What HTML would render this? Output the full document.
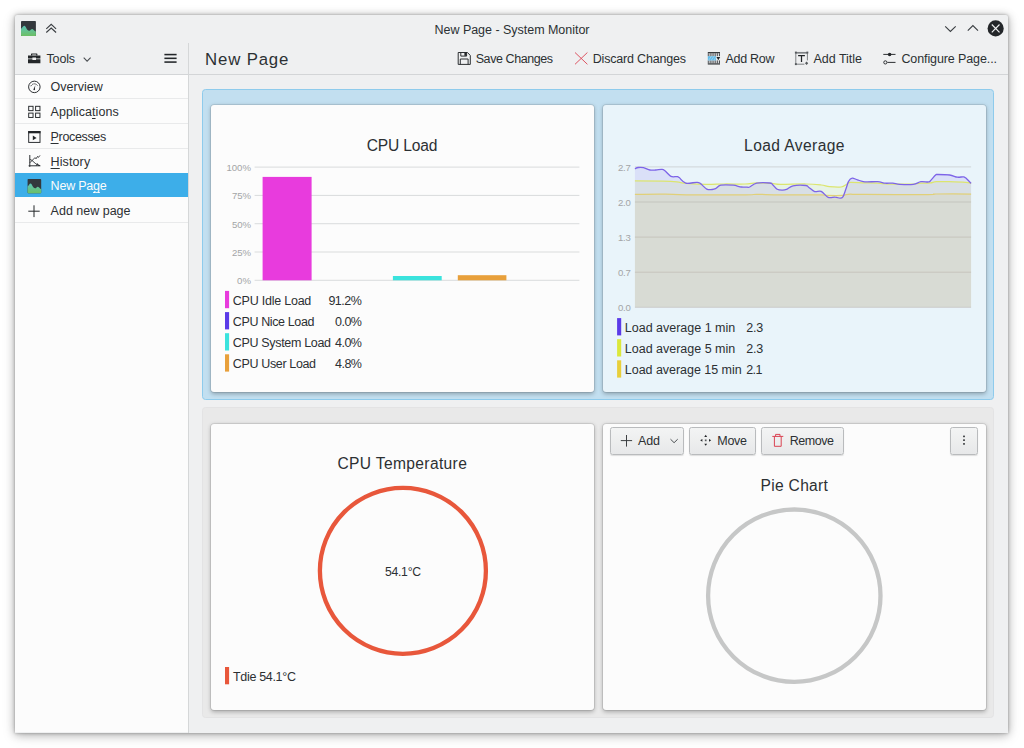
<!DOCTYPE html>
<html lang="en">
<head>
<meta charset="utf-8">
<title>New Page - System Monitor</title>
<style>
html,body{margin:0;padding:0;background:#fff;}
body{width:1024px;height:748px;position:relative;overflow:hidden;font-family:"Liberation Sans",sans-serif;}
.abs{position:absolute;}
#win{position:absolute;left:15px;top:15px;width:993.3px;height:717.5px;background:#eff0f1;border-radius:2px 2px 0 0;
  box-shadow:0 0 3px rgba(0,0,0,.30),0 1px 8px rgba(0,0,0,.25),0 3px 14px rgba(0,0,0,.15);}
#list{position:absolute;left:15px;top:74.6px;width:173px;height:657.9px;background:#fcfcfc;}
.sep{position:absolute;left:15px;width:173px;height:1px;background:#e9eaeb;}
#sel{position:absolute;left:15px;top:173px;width:173px;height:24.2px;background:#3daee9;}
#vsep{position:absolute;left:188px;top:43px;width:1px;height:689.5px;background:#d5d7d8;}
#hsep{position:absolute;left:15px;top:73.6px;width:993.3px;height:1px;background:#d3d5d7;}
.row{position:absolute;border-radius:3.5px;box-sizing:border-box;}
#row1{left:202px;top:88.5px;width:791.8px;height:311.4px;background:#c2dff0;border:1.2px solid #8ecbec;}
#row2{left:202px;top:407.2px;width:791.8px;height:311px;background:#e9e9e9;border:1px solid #e3e3e4;}
.card{position:absolute;border-radius:3px;background:#fcfcfc;
  box-shadow:0 0 0 0.8px rgba(0,0,0,.10),0 1.5px 4px rgba(0,0,0,.28);}
#c1{left:210.8px;top:105.4px;width:383.2px;height:286.2px;}
#c2{left:603px;top:105.4px;width:383.2px;height:286.2px;background:#e9f4fa;}
#c3{left:210.8px;top:423.5px;width:383.2px;height:286px;}
#c4{left:603px;top:423.5px;width:383.2px;height:286px;}
.btn{position:absolute;top:427px;height:28px;box-sizing:border-box;border:1px solid #b9bbbd;border-radius:2.5px;
  background:linear-gradient(#f3f4f4,#e7e8e9);box-shadow:0 1px 1px rgba(0,0,0,.12);}
.t{position:absolute;white-space:nowrap;line-height:20px;height:20px;}
.t u{text-decoration:underline;text-decoration-thickness:1px;text-underline-offset:1.5px;}
svg{position:absolute;left:0;top:0;overflow:visible;}
</style>
</head>
<body>
<div id="win"></div>
<div id="list"></div>
<div class="sep" style="top:98px"></div>
<div class="sep" style="top:123px"></div>
<div class="sep" style="top:148px"></div>
<div class="sep" style="top:172.5px"></div>
<div class="sep" style="top:222px"></div>
<div id="sel"></div>
<div id="hsep"></div>
<div id="vsep"></div>

<div class="row" id="row1"></div>
<div class="row" id="row2"></div>
<div class="card" id="c1"></div>
<div class="card" id="c2"></div>
<div class="card" id="c3"></div>
<div class="card" id="c4"></div>

<div class="btn" style="left:610px;width:73.8px"></div>
<div class="btn" style="left:688.9px;width:67.6px"></div>
<div class="btn" style="left:761.1px;width:82.6px"></div>
<div class="btn" style="left:950px;width:27.6px"></div>

<svg width="1024" height="748" viewBox="0 0 1024 748">
<g transform="translate(21,21) scale(0.9933333333333334,1.0)">
<defs><linearGradient id="g1" x1="0" y1="0" x2="0" y2="1"><stop offset="0" stop-color="#5bc4b8"/><stop offset="1" stop-color="#6dbf64"/></linearGradient></defs>
<rect x="0" y="0" width="15" height="15" rx="0.8" fill="#33383d"/>
<path d="M0,7.8 C1.2,7.2 2.2,4.6 3.4,4.8 C4.8,5 5.8,9.6 8.2,9.8 C9.6,9.9 10.2,7.9 11.4,8.1 C12.6,8.3 13.4,10.2 15,10.6 V14.2 Q15,15 14.2,15 H0.8 Q0,15 0,14.2 Z" fill="url(#g1)"/>
</g>
<g transform="translate(27.6,179) scale(0.9066666666666666,0.9533333333333334)">
<defs><linearGradient id="g2" x1="0" y1="0" x2="0" y2="1"><stop offset="0" stop-color="#5bc4b8"/><stop offset="1" stop-color="#6dbf64"/></linearGradient></defs>
<rect x="0" y="0" width="15" height="15" rx="0.8" fill="#33383d"/>
<path d="M0,7.8 C1.2,7.2 2.2,4.6 3.4,4.8 C4.8,5 5.8,9.6 8.2,9.8 C9.6,9.9 10.2,7.9 11.4,8.1 C12.6,8.3 13.4,10.2 15,10.6 V14.2 Q15,15 14.2,15 H0.8 Q0,15 0,14.2 Z" fill="url(#g2)"/>
</g>
<g fill="none" stroke="#3b3f43" stroke-width="1.15" stroke-linejoin="miter"><path d="M46.3,28.8 L51.2,24.3 L56.1,28.8"/><path d="M46.3,32.5 L51.2,28 L56.1,32.5"/></g>
<g fill="none" stroke="#3b3f43" stroke-width="1.15"><path d="M945.2,26.4 L950.4,31.4 L955.7,26.4"/><path d="M967.8,30.6 L972.9,25.5 L978,30.6"/></g>
<circle cx="995.65" cy="28.4" r="8.05" fill="#232629"/>
<path d="M991.8,24.5 L999.5,32.3 M999.5,24.5 L991.8,32.3" stroke="#eff0f1" stroke-width="1.15" fill="none"/>
<g fill="#232629">
<path d="M31.6,53.4 H36.8 Q37.4,53.4 37.4,54 V55.6 H36.2 V54.6 H32.2 V55.6 H31 V54 Q31,53.4 31.6,53.4 Z"/>
<path d="M28,55.6 H40.4 V58.6 H36 V57.6 H32.4 V58.6 H28 Z"/>
<path d="M28,59.3 H32.4 V60 H36 V59.3 H40.4 V63.3 H28 Z"/>
</g>
<path d="M83.7,57.6 L87.1,61.2 L90.6,57.6" fill="none" stroke="#4a4e52" stroke-width="1.05"/>
<g fill="#232629"><rect x="164.4" y="53.8" width="12.2" height="1.55"/><rect x="164.4" y="57.55" width="12.2" height="1.55"/><rect x="164.4" y="61.3" width="12.2" height="1.55"/></g>
<g fill="none" stroke="#232629" stroke-width="0.95">
<circle cx="34.35" cy="86.9" r="5.75"/>
<path d="M30.9,86.2 A3.7,3.7 0 0 1 37.8,86.2" stroke-width="1" stroke-dasharray="1.3 0.9"/>
</g>
<path d="M35.3,85.3 L34.9,88.9 A0.8,0.8 0 1 1 33.9,88.6 Z" fill="#232629"/>
<rect x="28.7" y="106.3" width="4.35" height="4.35" fill="none" stroke="#232629" stroke-width="0.95"/>
<rect x="35.6" y="106.3" width="4.35" height="4.35" fill="none" stroke="#232629" stroke-width="0.95"/>
<rect x="28.7" y="113.1" width="4.35" height="4.35" fill="none" stroke="#232629" stroke-width="0.95"/>
<rect x="35.6" y="113.1" width="4.35" height="4.35" fill="none" stroke="#232629" stroke-width="0.95"/>
<rect x="28.7" y="131.6" width="11.3" height="10.8" fill="none" stroke="#232629" stroke-width="0.95"/>
<rect x="28.2" y="131" width="12.3" height="2.3" fill="#232629"/>
<path d="M32.8,135.6 L36.6,137.9 L32.8,140.2 Z" fill="#232629"/>
<g fill="none" stroke="#232629" stroke-width="0.95">
<path d="M29.8,155 V166.9 M28.6,165.8 H40.4"/>
<path d="M29.8,162.8 L35,157.6 L36,158.8 L37.6,156.4 L38.4,157.4 L40,155.4" stroke-width="0.85"/>
<path d="M29.8,159.4 C33,160 34.5,164.4 40,165.6" stroke-width="0.85"/>
<path d="M36.2,165.8 L37.4,163.6 L38.6,165.8" stroke-width="0.8"/>
</g>
<path d="M28.3,211.2 H39.7 M34,205.3 V217.1" stroke="#232629" stroke-width="1" fill="none"/>
<g fill="none" stroke="#232629" stroke-width="0.95">
<path d="M458.2,52.5 H467.4 L470.3,55.4 V64.4 H458.2 Z"/>
<path d="M460.8,52.5 V56.1 H466.6 V52.5"/>
<path d="M460.3,64.4 V59 H468.1 V64.4"/>
</g>
<rect x="464.4" y="52.6" width="1.9" height="3.2" fill="#232629"/>
<path d="M575,52.5 L587.4,64.3 M587.4,52.5 L575,64.3" stroke="#da4453" stroke-width="1" fill="none" opacity="0.9"/>
<rect x="707.8" y="52.1" width="12.2" height="1.1" fill="#232629"/>
<rect x="707.8" y="63.4" width="12.2" height="1.1" fill="#232629"/>
<rect x="707.80" y="53.2" width="0.92" height="3" fill="#232629" opacity="0.85"/><rect x="707.80" y="60.4" width="0.92" height="3" fill="#232629" opacity="0.85"/>
<rect x="709.68" y="53.2" width="0.92" height="3" fill="#232629" opacity="0.85"/><rect x="709.68" y="60.4" width="0.92" height="3" fill="#232629" opacity="0.85"/>
<rect x="711.56" y="53.2" width="0.92" height="3" fill="#232629" opacity="0.85"/><rect x="711.56" y="60.4" width="0.92" height="3" fill="#232629" opacity="0.85"/>
<rect x="713.44" y="53.2" width="0.92" height="3" fill="#232629" opacity="0.85"/><rect x="713.44" y="60.4" width="0.92" height="3" fill="#232629" opacity="0.85"/>
<rect x="715.32" y="53.2" width="0.92" height="3" fill="#232629" opacity="0.85"/><rect x="715.32" y="60.4" width="0.92" height="3" fill="#232629" opacity="0.85"/>
<rect x="717.20" y="53.2" width="0.92" height="3" fill="#232629" opacity="0.85"/><rect x="717.20" y="60.4" width="0.92" height="3" fill="#232629" opacity="0.85"/>
<rect x="719.08" y="53.2" width="0.92" height="3" fill="#232629" opacity="0.85"/><rect x="719.08" y="60.4" width="0.92" height="3" fill="#232629" opacity="0.85"/>
<rect x="707.8" y="56.2" width="8.3" height="4.2" fill="#3daee9" opacity="0.8"/>
<path d="M708.6,60.4 L711.4,56.2 M711.2,60.4 L714,56.2 M713.8,60.4 L716.1,57" stroke="#eff0f1" stroke-width="0.5" opacity="0.8"/>
<path d="M716.4,56.9 H720.2 L718.3,60.2 Z" fill="#232629"/>
<g fill="none" stroke="#7f8285" stroke-width="1">
<path d="M795.8,52.4 V64.2 M795.8,64.2 H804.4 M807.4,52.4 V60.4"/><path d="M795.8,52.8 H807.4" stroke-width="1.7"/>
</g>
<g fill="#55595c"><rect x="794.9" y="51.6" width="1.9" height="1.9"/><rect x="806.4" y="51.6" width="1.9" height="1.9"/><rect x="794.9" y="63.2" width="1.9" height="1.9"/>
<path d="M806.6,61.6 L808.2,63.3 L806.6,65 L805,63.3 Z"/></g>
<path d="M798.1,55.7 H804.9 M801.5,55.7 V61.9" stroke="#232629" stroke-width="1.25" fill="none"/>
<path d="M883.3,54.4 H895.5 M887.4,62.4 H895.5" stroke="#232629" stroke-width="0.95" fill="none"/>
<circle cx="889.6" cy="54.4" r="1.75" fill="#232629"/>
<circle cx="885.35" cy="62.4" r="1.6" fill="none" stroke="#232629" stroke-width="0.95"/>
<rect x="254.6" y="166.60" width="324.8" height="1" fill="#d9dbdc"/>
<rect x="254.6" y="194.90" width="324.8" height="1" fill="#d9dbdc"/>
<rect x="254.6" y="223.20" width="324.8" height="1" fill="#d9dbdc"/>
<rect x="254.6" y="251.50" width="324.8" height="1" fill="#d9dbdc"/>
<rect x="254.6" y="279.80" width="324.8" height="1" fill="#d9dbdc"/>
<rect x="262.6" y="176.9" width="49" height="103.4" fill="#e83bdd"/>
<rect x="392.9" y="276.0" width="48.8" height="4.3" fill="#3be3dd"/>
<rect x="457.8" y="275.2" width="48.6" height="5.1" fill="#e8a03b"/>
<rect x="225" y="290.9" width="4.1" height="17.3" fill="#e83bdd"/>
<rect x="225" y="312.1" width="4.1" height="17.3" fill="#5b3be8"/>
<rect x="225" y="333.2" width="4.1" height="17.3" fill="#3be3dd"/>
<rect x="225" y="354.3" width="4.1" height="17.3" fill="#e8a03b"/>
<rect x="634.9" y="166.40" width="336.2" height="1" fill="#cfd4d7"/>
<rect x="634.9" y="201.50" width="336.2" height="1" fill="#cfd4d7"/>
<rect x="634.9" y="236.60" width="336.2" height="1" fill="#cfd4d7"/>
<rect x="634.9" y="271.70" width="336.2" height="1" fill="#cfd4d7"/>
<rect x="634.9" y="306.80" width="336.2" height="1" fill="#cfd4d7"/>
<path d="M634.9,194.3 C640.0,194.3 656.6,194.1 665.2,194.2 C673.8,194.3 673.0,194.8 686.3,194.9 C699.6,195.0 733.3,195.0 745.0,194.9 C756.7,194.8 750.8,194.3 756.7,194.3 C762.6,194.3 769.5,194.8 780.2,194.9 C791.0,195.0 813.4,194.8 821.2,194.9 C829.0,195.0 823.5,195.3 827.0,195.4 C830.5,195.5 838.8,195.6 842.3,195.4 C845.8,195.2 844.3,194.5 848.1,194.3 C851.9,194.1 851.7,194.4 865.0,194.4 C878.3,194.4 916.1,194.7 928.0,194.6 C939.9,194.5 929.0,194.1 936.2,194.0 C943.4,193.9 965.3,194.0 971.1,194.0 L971.1,307.3 L634.9,307.3 Z" fill="#e8cf3b" fill-opacity="0.105"/>
<path d="M634.9,180.9 C639.5,180.9 655.8,180.9 662.8,181.1 C669.8,181.3 673.0,181.5 676.9,181.9 C680.8,182.3 681.4,183.0 686.3,183.4 C691.2,183.8 700.0,184.3 706.2,184.4 C712.5,184.5 717.3,184.1 723.8,184.0 C730.3,183.9 739.5,184.2 745.0,184.0 C750.5,183.8 752.2,183.0 756.7,182.9 C761.2,182.8 768.1,183.2 772.0,183.4 C775.9,183.7 774.6,184.3 780.2,184.4 C785.9,184.5 799.1,183.9 805.9,184.0 C812.7,184.1 817.3,184.6 821.2,185.0 C825.1,185.4 826.1,186.4 829.4,186.7 C832.7,187.0 838.2,187.4 841.1,187.0 C844.0,186.6 845.4,184.8 847.0,184.0 C848.6,183.2 847.5,182.5 850.5,182.3 C853.5,182.1 860.5,182.8 865.0,182.9 C869.5,183.0 874.2,182.9 877.6,183.1 C881.0,183.2 879.2,183.7 885.2,183.8 C891.2,184.0 907.3,184.1 913.3,184.0 C919.2,183.9 918.1,183.4 920.9,183.2 C923.7,183.0 927.8,183.2 930.3,182.9 C932.8,182.7 933.1,181.9 936.2,181.7 C939.3,181.5 944.1,181.6 949.0,181.7 C953.9,181.8 961.8,182.0 965.5,182.3 C969.2,182.6 970.2,183.2 971.1,183.4 L971.1,307.3 L634.9,307.3 Z" fill="#dbe83b" fill-opacity="0.105"/>
<path d="M634.9,168.8 C635.5,168.6 636.8,167.7 638.2,167.5 C639.6,167.3 641.5,167.2 643.5,167.6 C645.5,168.0 647.9,169.6 649.9,170.0 C651.9,170.4 653.8,170.1 655.8,170.0 C657.8,169.9 660.1,169.3 661.6,169.4 C663.1,169.5 663.0,169.3 664.6,170.5 C666.2,171.7 669.0,175.4 671.0,176.4 C673.0,177.4 675.5,176.4 676.9,176.6 C678.3,176.8 677.7,176.5 679.2,177.6 C680.7,178.7 682.8,182.3 685.7,183.1 C688.6,183.9 694.4,182.2 696.8,182.3 C699.2,182.4 698.6,182.3 700.3,183.4 C702.0,184.5 704.8,188.1 706.8,189.1 C708.8,190.1 710.5,189.6 712.0,189.5 C713.5,189.4 714.0,189.4 715.5,188.7 C717.0,188.0 717.9,185.8 720.8,185.2 C723.7,184.6 729.7,184.9 733.1,185.2 C736.5,185.5 738.9,186.7 741.3,187.0 C743.6,187.3 745.8,187.2 747.2,187.2 C748.6,187.2 748.1,187.7 749.7,187.0 C751.3,186.3 753.4,183.9 756.7,183.2 C760.0,182.5 767.0,182.8 769.6,183.0 C772.2,183.2 771.2,183.3 772.5,184.4 C773.8,185.5 775.5,188.3 777.2,189.3 C778.9,190.3 780.8,190.2 782.5,190.2 C784.2,190.2 785.5,189.8 787.2,189.1 C789.0,188.4 789.9,186.4 793.0,185.8 C796.1,185.2 803.2,185.2 805.9,185.5 C808.5,185.8 807.4,186.5 808.9,187.5 C810.4,188.5 812.7,190.9 814.7,191.6 C816.8,192.2 819.0,190.4 821.2,191.4 C823.5,192.4 825.9,196.4 828.2,197.3 C830.5,198.2 833.2,196.9 835.2,197.1 C837.2,197.2 838.6,198.2 839.9,198.2 C841.2,198.2 841.9,198.4 842.9,196.9 C843.9,195.4 844.8,191.9 845.8,189.3 C846.8,186.7 847.6,182.9 848.7,181.1 C849.8,179.2 850.7,178.4 852.2,178.2 C853.7,178.0 855.4,179.3 857.5,179.9 C859.6,180.5 861.4,181.5 864.7,181.8 C868.1,182.1 874.2,181.5 877.6,181.7 C881.0,181.9 882.7,182.9 885.2,183.2 C887.7,183.4 890.4,183.0 892.8,183.2 C895.2,183.4 896.4,184.2 899.8,184.4 C903.2,184.6 909.8,184.9 913.3,184.4 C916.8,183.9 918.4,182.1 920.9,181.7 C923.4,181.3 926.4,182.1 928.0,182.0 C929.6,181.9 929.0,182.1 930.3,180.9 C931.6,179.7 934.3,176.1 935.6,175.0 C936.9,173.9 935.5,174.5 937.9,174.5 C940.2,174.5 946.5,174.6 949.7,175.0 C952.9,175.4 955.1,176.9 957.3,177.2 C959.5,177.5 961.7,176.7 963.1,176.8 C964.5,176.9 964.2,176.7 965.5,177.8 C966.8,178.9 970.2,182.5 971.1,183.4 L971.1,307.3 L634.9,307.3 Z" fill="#5b3be8" fill-opacity="0.105"/>
<path d="M634.9,194.3 C640.0,194.3 656.6,194.1 665.2,194.2 C673.8,194.3 673.0,194.8 686.3,194.9 C699.6,195.0 733.3,195.0 745.0,194.9 C756.7,194.8 750.8,194.3 756.7,194.3 C762.6,194.3 769.5,194.8 780.2,194.9 C791.0,195.0 813.4,194.8 821.2,194.9 C829.0,195.0 823.5,195.3 827.0,195.4 C830.5,195.5 838.8,195.6 842.3,195.4 C845.8,195.2 844.3,194.5 848.1,194.3 C851.9,194.1 851.7,194.4 865.0,194.4 C878.3,194.4 916.1,194.7 928.0,194.6 C939.9,194.5 929.0,194.1 936.2,194.0 C943.4,193.9 965.3,194.0 971.1,194.0" fill="none" stroke="#e1d078" stroke-width="1.25" stroke-linejoin="round"/>
<path d="M634.9,180.9 C639.5,180.9 655.8,180.9 662.8,181.1 C669.8,181.3 673.0,181.5 676.9,181.9 C680.8,182.3 681.4,183.0 686.3,183.4 C691.2,183.8 700.0,184.3 706.2,184.4 C712.5,184.5 717.3,184.1 723.8,184.0 C730.3,183.9 739.5,184.2 745.0,184.0 C750.5,183.8 752.2,183.0 756.7,182.9 C761.2,182.8 768.1,183.2 772.0,183.4 C775.9,183.7 774.6,184.3 780.2,184.4 C785.9,184.5 799.1,183.9 805.9,184.0 C812.7,184.1 817.3,184.6 821.2,185.0 C825.1,185.4 826.1,186.4 829.4,186.7 C832.7,187.0 838.2,187.4 841.1,187.0 C844.0,186.6 845.4,184.8 847.0,184.0 C848.6,183.2 847.5,182.5 850.5,182.3 C853.5,182.1 860.5,182.8 865.0,182.9 C869.5,183.0 874.2,182.9 877.6,183.1 C881.0,183.2 879.2,183.7 885.2,183.8 C891.2,184.0 907.3,184.1 913.3,184.0 C919.2,183.9 918.1,183.4 920.9,183.2 C923.7,183.0 927.8,183.2 930.3,182.9 C932.8,182.7 933.1,181.9 936.2,181.7 C939.3,181.5 944.1,181.6 949.0,181.7 C953.9,181.8 961.8,182.0 965.5,182.3 C969.2,182.6 970.2,183.2 971.1,183.4" fill="none" stroke="#dce56e" stroke-width="1.25" stroke-linejoin="round"/>
<path d="M634.9,168.8 C635.5,168.6 636.8,167.7 638.2,167.5 C639.6,167.3 641.5,167.2 643.5,167.6 C645.5,168.0 647.9,169.6 649.9,170.0 C651.9,170.4 653.8,170.1 655.8,170.0 C657.8,169.9 660.1,169.3 661.6,169.4 C663.1,169.5 663.0,169.3 664.6,170.5 C666.2,171.7 669.0,175.4 671.0,176.4 C673.0,177.4 675.5,176.4 676.9,176.6 C678.3,176.8 677.7,176.5 679.2,177.6 C680.7,178.7 682.8,182.3 685.7,183.1 C688.6,183.9 694.4,182.2 696.8,182.3 C699.2,182.4 698.6,182.3 700.3,183.4 C702.0,184.5 704.8,188.1 706.8,189.1 C708.8,190.1 710.5,189.6 712.0,189.5 C713.5,189.4 714.0,189.4 715.5,188.7 C717.0,188.0 717.9,185.8 720.8,185.2 C723.7,184.6 729.7,184.9 733.1,185.2 C736.5,185.5 738.9,186.7 741.3,187.0 C743.6,187.3 745.8,187.2 747.2,187.2 C748.6,187.2 748.1,187.7 749.7,187.0 C751.3,186.3 753.4,183.9 756.7,183.2 C760.0,182.5 767.0,182.8 769.6,183.0 C772.2,183.2 771.2,183.3 772.5,184.4 C773.8,185.5 775.5,188.3 777.2,189.3 C778.9,190.3 780.8,190.2 782.5,190.2 C784.2,190.2 785.5,189.8 787.2,189.1 C789.0,188.4 789.9,186.4 793.0,185.8 C796.1,185.2 803.2,185.2 805.9,185.5 C808.5,185.8 807.4,186.5 808.9,187.5 C810.4,188.5 812.7,190.9 814.7,191.6 C816.8,192.2 819.0,190.4 821.2,191.4 C823.5,192.4 825.9,196.4 828.2,197.3 C830.5,198.2 833.2,196.9 835.2,197.1 C837.2,197.2 838.6,198.2 839.9,198.2 C841.2,198.2 841.9,198.4 842.9,196.9 C843.9,195.4 844.8,191.9 845.8,189.3 C846.8,186.7 847.6,182.9 848.7,181.1 C849.8,179.2 850.7,178.4 852.2,178.2 C853.7,178.0 855.4,179.3 857.5,179.9 C859.6,180.5 861.4,181.5 864.7,181.8 C868.1,182.1 874.2,181.5 877.6,181.7 C881.0,181.9 882.7,182.9 885.2,183.2 C887.7,183.4 890.4,183.0 892.8,183.2 C895.2,183.4 896.4,184.2 899.8,184.4 C903.2,184.6 909.8,184.9 913.3,184.4 C916.8,183.9 918.4,182.1 920.9,181.7 C923.4,181.3 926.4,182.1 928.0,182.0 C929.6,181.9 929.0,182.1 930.3,180.9 C931.6,179.7 934.3,176.1 935.6,175.0 C936.9,173.9 935.5,174.5 937.9,174.5 C940.2,174.5 946.5,174.6 949.7,175.0 C952.9,175.4 955.1,176.9 957.3,177.2 C959.5,177.5 961.7,176.7 963.1,176.8 C964.5,176.9 964.2,176.7 965.5,177.8 C966.8,178.9 970.2,182.5 971.1,183.4" fill="none" stroke="#7d64e8" stroke-width="1.3" stroke-linejoin="round"/>
<rect x="617.1" y="318.1" width="4.1" height="17.3" fill="#5b3be8"/>
<rect x="617.1" y="339.2" width="4.1" height="17.3" fill="#dbe83b"/>
<rect x="617.1" y="360.3" width="4.1" height="17.3" fill="#e8cf3b"/>
<circle cx="402.9" cy="570.8" r="83" fill="none" stroke="#e8573b" stroke-width="4.3"/>
<rect x="225" y="667" width="4.1" height="17.3" fill="#e8573b"/>
<circle cx="794.3" cy="595.7" r="86.2" fill="none" stroke="#c6c7c7" stroke-width="4.3"/>
<path d="M620.8,440.6 H632.1 M626.5,435 V446.6" stroke="#34373a" stroke-width="0.95" fill="none"/>
<path d="M670.5,439.2 L674.1,442.7 L677.7,439.2" fill="none" stroke="#4a4e52" stroke-width="1"/>
<g fill="#232629">
<path d="M704.25,437.05 L705.7,434.85 L707.1500000000001,437.05 Z"/>
<path d="M704.25,443.65000000000003 L705.7,445.85 L707.1500000000001,443.65000000000003 Z"/>
<path d="M702.4000000000001,438.90000000000003 L700.2,440.35 L702.4000000000001,441.8 Z"/>
<path d="M709.0,438.90000000000003 L711.2,440.35 L709.0,441.8 Z"/>
<rect x="704.85" y="439.5" width="1.7" height="1.7" opacity="0.75"/>
</g>
<g fill="none" stroke="#da4453" stroke-width="1">
<path d="M772.3,436.4 H783.3"/>
<path d="M775.6,436.4 V434.4 H780 V436.4"/>
<path d="M774.4,436.4 V446.3 H781.2 V436.4"/>
</g>
<rect x="963.2" y="435.59999999999997" width="1.6" height="1.6" fill="#232629"/>
<rect x="963.2" y="439.34999999999997" width="1.6" height="1.6" fill="#232629"/>
<rect x="963.2" y="443.09999999999997" width="1.6" height="1.6" fill="#232629"/>
</svg>

<span class="t" style="left:434.50px;top:20.00px;font-size:12.5px;letter-spacing:-0.025px;color:#2c3033;">New Page - System Monitor</span>
<span class="t" style="left:46.50px;top:49.00px;font-size:12.5px;letter-spacing:-0.153px;color:#2c3033;">Tools</span>
<span class="t" style="left:205.00px;top:50.00px;font-size:16.8px;letter-spacing:0.848px;color:#2c3033;">New Page</span>
<span class="t" style="left:475.70px;top:49.00px;font-size:12.5px;letter-spacing:-0.419px;color:#2c3033;">Save Changes</span>
<span class="t" style="left:592.70px;top:49.00px;font-size:12.5px;letter-spacing:-0.179px;color:#2c3033;">Discard Changes</span>
<span class="t" style="left:725.50px;top:49.00px;font-size:12.5px;letter-spacing:-0.298px;color:#2c3033;">Add Row</span>
<span class="t" style="left:813.50px;top:49.00px;font-size:12.5px;letter-spacing:-0.017px;color:#2c3033;">Add Title</span>
<span class="t" style="left:901.40px;top:49.00px;font-size:12.5px;letter-spacing:-0.103px;color:#2c3033;">Configure Page...</span>
<span class="t" style="left:50.60px;top:77.00px;font-size:12.5px;letter-spacing:0.001px;color:#2c3033;">Overview</span>
<span class="t" style="left:50.60px;top:102.00px;font-size:12.5px;letter-spacing:0.059px;color:#2c3033;">Applica<u>t</u>ions</span>
<span class="t" style="left:50.60px;top:127.00px;font-size:12.5px;letter-spacing:-0.350px;color:#2c3033;"><u>P</u>rocesses</span>
<span class="t" style="left:50.60px;top:152.00px;font-size:12.5px;letter-spacing:0.107px;color:#2c3033;"><u>H</u>istory</span>
<span class="t" style="left:50.60px;top:176.00px;font-size:12.5px;letter-spacing:-0.212px;color:#fcfcfc;">New Pa<u>g</u>e</span>
<span class="t" style="left:50.60px;top:201.00px;font-size:12.5px;letter-spacing:-0.003px;color:#2c3033;">Add new page</span>
<span class="t" style="left:366.70px;top:136.00px;font-size:15.6px;letter-spacing:-0.167px;color:#2c3033;">CPU Load</span>
<span class="t" style="left:744.10px;top:136.00px;font-size:15.6px;letter-spacing:0.403px;color:#2c3033;">Load Average</span>
<span class="t" style="left:337.50px;top:454.00px;font-size:15.6px;letter-spacing:0.344px;color:#2c3033;">CPU Temperature</span>
<span class="t" style="left:760.60px;top:476.00px;font-size:15.6px;letter-spacing:0.281px;color:#2c3033;">Pie Chart</span>
<span class="t" style="left:226.50px;top:158.00px;font-size:9.6px;letter-spacing:-0.042px;color:#a3a5a6;">100%</span>
<span class="t" style="left:231.90px;top:186.00px;font-size:9.6px;letter-spacing:-0.081px;color:#a3a5a6;">75%</span>
<span class="t" style="left:231.90px;top:215.00px;font-size:9.6px;letter-spacing:-0.081px;color:#a3a5a6;">50%</span>
<span class="t" style="left:231.90px;top:243.00px;font-size:9.6px;letter-spacing:-0.081px;color:#a3a5a6;">25%</span>
<span class="t" style="left:237.10px;top:271.00px;font-size:9.6px;letter-spacing:-0.050px;color:#a3a5a6;">0%</span>
<span class="t" style="left:232.80px;top:291.00px;font-size:12.5px;letter-spacing:-0.233px;color:#2c3033;">CPU Idle Load</span>
<span class="t" style="left:328.40px;top:291.00px;font-size:12.5px;letter-spacing:-0.478px;color:#2c3033;">91.2%</span>
<span class="t" style="left:232.80px;top:312.00px;font-size:12.5px;letter-spacing:-0.372px;color:#2c3033;">CPU Nice Load</span>
<span class="t" style="left:335.10px;top:312.00px;font-size:12.5px;letter-spacing:-0.543px;color:#2c3033;">0.0%</span>
<span class="t" style="left:232.80px;top:333.00px;font-size:12.5px;letter-spacing:-0.326px;color:#2c3033;">CPU System Load</span>
<span class="t" style="left:335.10px;top:333.00px;font-size:12.5px;letter-spacing:-0.543px;color:#2c3033;">4.0%</span>
<span class="t" style="left:232.80px;top:354.00px;font-size:12.5px;letter-spacing:-0.356px;color:#2c3033;">CPU User Load</span>
<span class="t" style="left:335.10px;top:354.00px;font-size:12.5px;letter-spacing:-0.543px;color:#2c3033;">4.8%</span>
<span class="t" style="left:618.00px;top:158.00px;font-size:9.6px;letter-spacing:-0.298px;color:#a3a5a6;">2.7</span>
<span class="t" style="left:618.00px;top:193.00px;font-size:9.6px;letter-spacing:-0.298px;color:#a3a5a6;">2.0</span>
<span class="t" style="left:618.00px;top:228.00px;font-size:9.6px;letter-spacing:-0.298px;color:#a3a5a6;">1.3</span>
<span class="t" style="left:618.00px;top:263.00px;font-size:9.6px;letter-spacing:-0.298px;color:#a3a5a6;">0.7</span>
<span class="t" style="left:618.00px;top:298.00px;font-size:9.6px;letter-spacing:-0.298px;color:#a3a5a6;">0.0</span>
<span class="t" style="left:624.80px;top:318.00px;font-size:12.5px;letter-spacing:-0.006px;color:#2c3033;">Load average 1 min</span>
<span class="t" style="left:746.30px;top:318.00px;font-size:12.5px;letter-spacing:-0.276px;color:#2c3033;">2.3</span>
<span class="t" style="left:624.80px;top:339.00px;font-size:12.5px;letter-spacing:-0.006px;color:#2c3033;">Load average 5 min</span>
<span class="t" style="left:746.30px;top:339.00px;font-size:12.5px;letter-spacing:-0.276px;color:#2c3033;">2.3</span>
<span class="t" style="left:624.80px;top:360.00px;font-size:12.5px;letter-spacing:-0.030px;color:#2c3033;">Load average 15 min</span>
<span class="t" style="left:746.30px;top:360.00px;font-size:12.5px;letter-spacing:-0.636px;color:#2c3033;">2.1</span>
<span class="t" style="left:384.90px;top:562.00px;font-size:12.2px;letter-spacing:-0.237px;color:#2c3033;">54.1°C</span>
<span class="t" style="left:233.00px;top:667.00px;font-size:12.5px;letter-spacing:-0.320px;color:#2c3033;">Tdie 54.1°C</span>
<span class="t" style="left:637.90px;top:431.00px;font-size:12.5px;letter-spacing:-0.100px;color:#2c3033;">Add</span>
<span class="t" style="left:717.30px;top:431.00px;font-size:12.5px;letter-spacing:-0.308px;color:#2c3033;">Move</span>
<span class="t" style="left:789.80px;top:431.00px;font-size:12.5px;letter-spacing:-0.481px;color:#2c3033;">Remove</span>
</body>
</html>
